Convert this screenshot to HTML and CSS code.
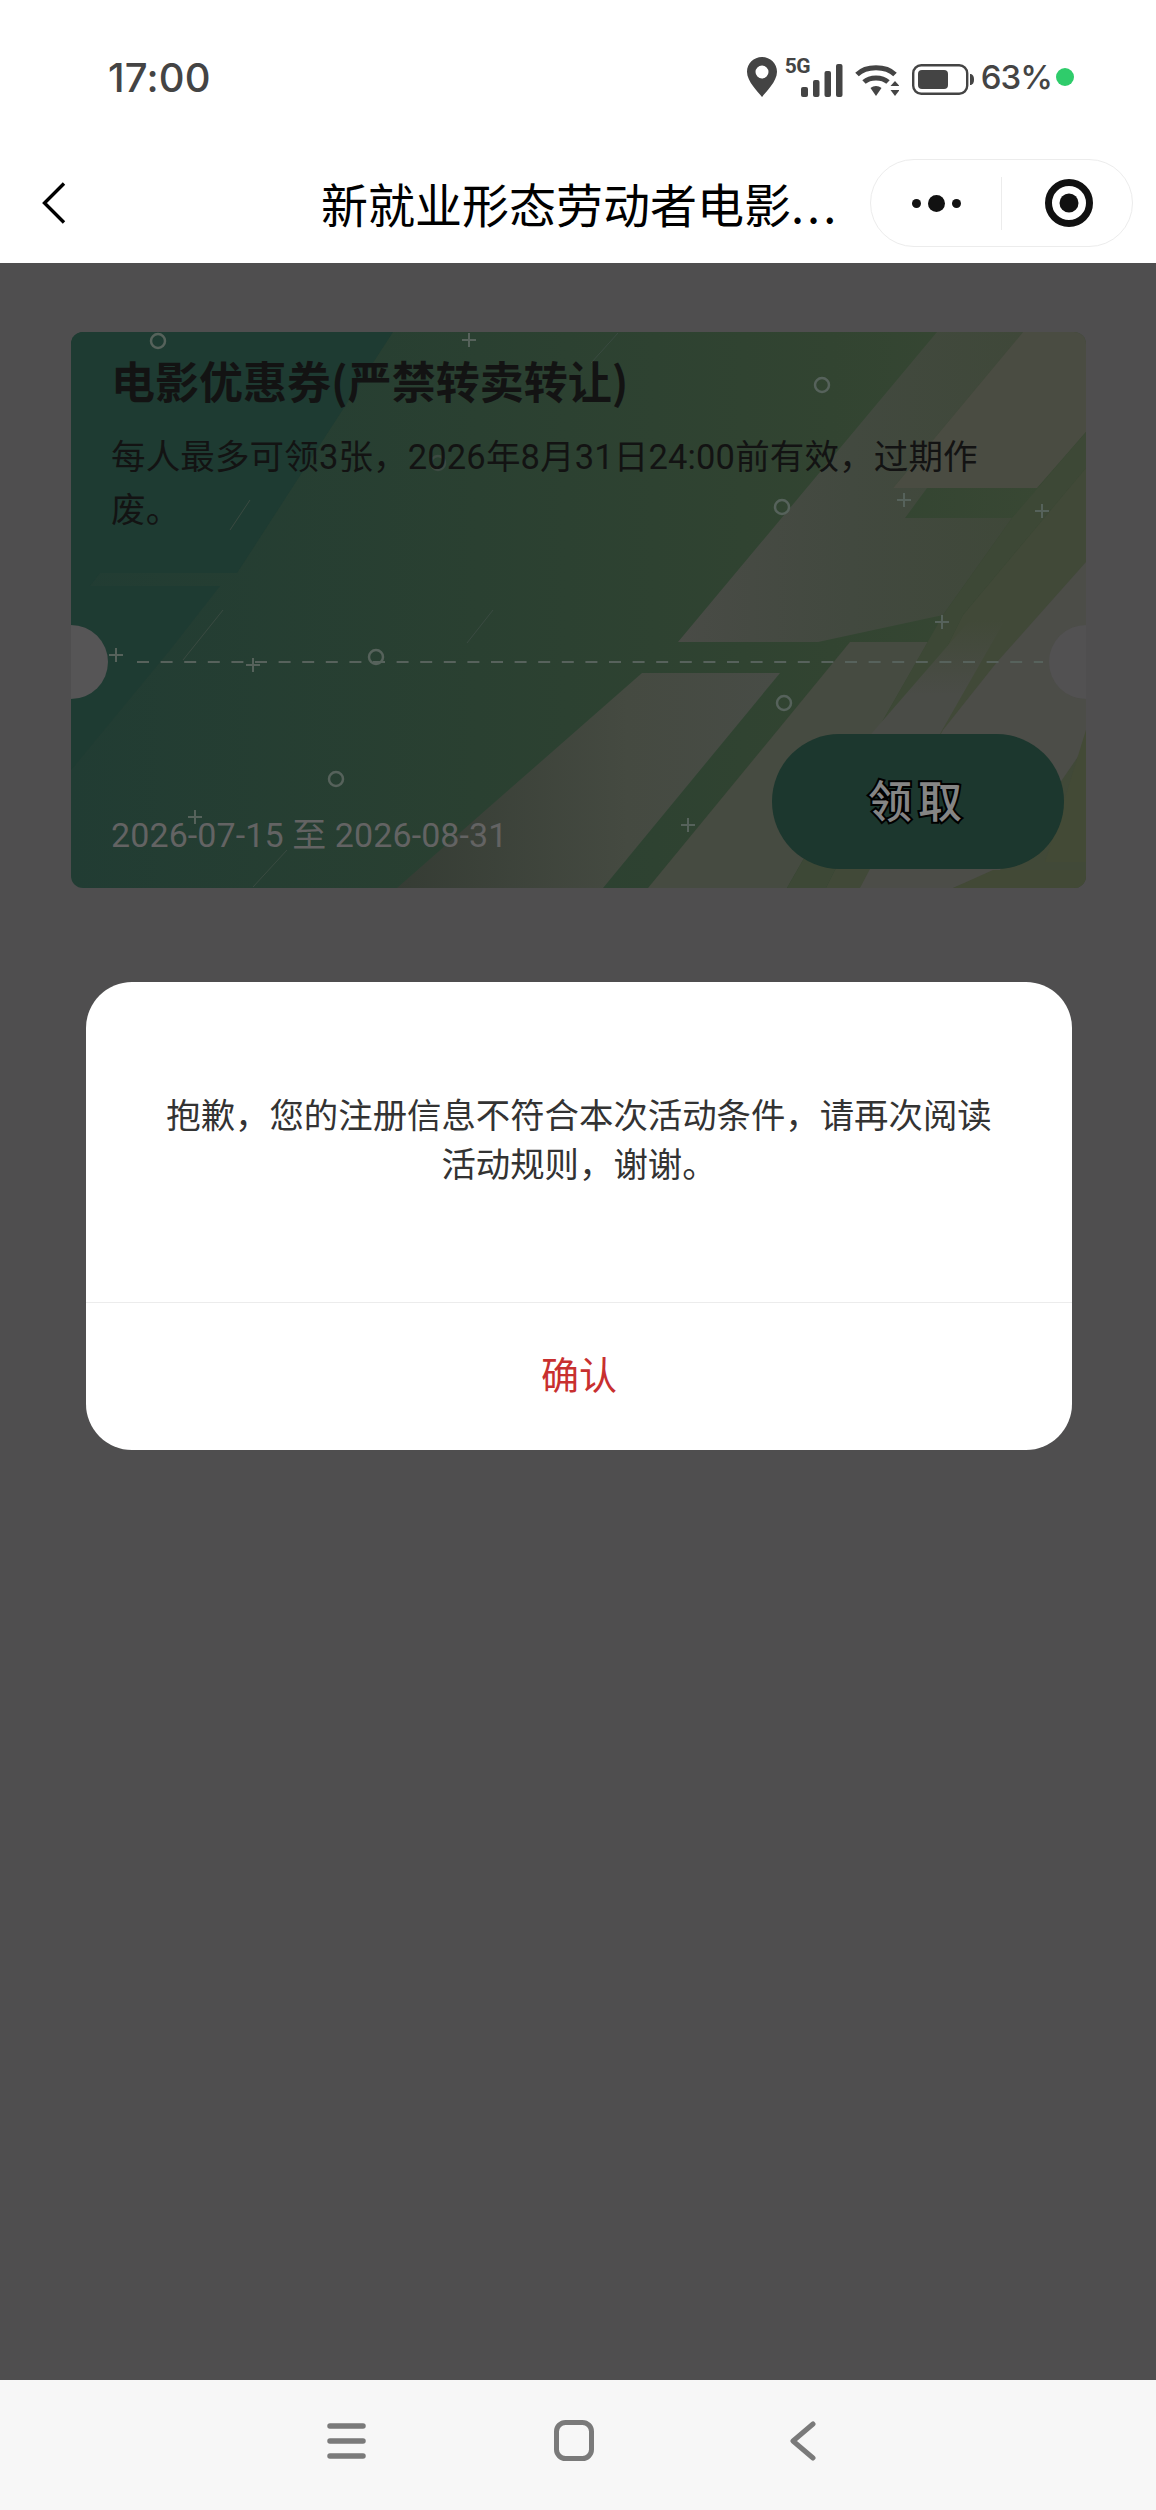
FILE: index.html
```html
<!DOCTYPE html>
<html lang="zh-CN">
<head>
<meta charset="utf-8">
<title>电影优惠券</title>
<link rel="stylesheet" href="styles.css">
</head>
<body>
<div class="phone">
  <header class="top">
    <div class="status">
      <span class="time">17:00</span>
      <div class="status-icons">
        <svg class="ico-pin" viewBox="0 0 30 40"><path fill="#444" fill-rule="evenodd" d="M15 0C6.700 0 0 6.600 0 14.800 0 24.500 11 35 15 40c4-5 15-15.500 15-25.200C30 6.600 23.300 0 15 0Zm0 8.500a6.500 6.500 0 1 1 0 13 6.500 6.500 0 0 1 0-13Z"/></svg>
        <div class="net">
          <span class="five-g">5G</span>
          <svg class="ico-bars" viewBox="0 0 42 33"><g fill="#444"><rect x="0" y="23" width="7" height="10" rx="2"/><rect x="12" y="16" width="6.500" height="17" rx="2"/><rect x="23.500" y="7" width="6.500" height="26" rx="2"/><rect x="35" y="0" width="6.500" height="33" rx="2"/></g></svg>
        </div>
        <svg class="ico-wifi" viewBox="0 0 44 33"><g fill="none" stroke="#444" stroke-width="5"><path d="M2 10.500C11 1.500 31 1.500 40 10.500"/><path d="M9 18c6-5.500 18-5.500 24 0"/></g><g fill="#444"><path d="M15.500 24c3-2.800 8-2.800 11 0L21 32Z"/><path d="M40 17l4.500 5h-9Z"/><path d="M40 32l-4.500-6h9Z"/></g></svg>
        <svg class="ico-batt" viewBox="0 0 62 31"><rect x="1.200" y="1.200" width="54" height="28.600" rx="8" fill="none" stroke="#444" stroke-width="2.400"/><rect x="6" y="6" width="30" height="19" rx="4" fill="#444"/><path d="M58 10c3 0 4 2.500 4 5.500S61 21 58 21Z" fill="#444"/></svg>
        <span class="pct">63%</span>
        <span class="led"></span>
      </div>
    </div>
    <nav class="navbar">
      <svg class="ico-back" viewBox="0 0 24 42"><path d="M22 1.500 2.500 21 22 40.500" fill="none" stroke="#000" stroke-width="3.400"/></svg>
      <h1 class="title">新就业形态劳动者电影<span class="ell">...</span></h1>
      <div class="capsule">
        <div class="cap-more"><i class="d-s"></i><i class="d-l"></i><i class="d-s"></i></div>
        <div class="cap-sep"></div>
        <div class="cap-close"><svg viewBox="0 0 50 50"><circle cx="25" cy="25" r="20.500" fill="none" stroke="#111" stroke-width="7"/><circle cx="25" cy="25" r="9.500" fill="#111"/></svg></div>
      </div>
    </nav>
  </header>

  <main class="main">
    <section class="coupon">
      <svg class="coupon-art" viewBox="71 332 1015 556" preserveAspectRatio="none" aria-hidden="true">
        <defs>
          <linearGradient id="gBase" x1="0" y1="0" x2="1" y2="0"><stop offset="0" stop-color="#213c33"/><stop offset=".4" stop-color="#2a4031"/><stop offset=".75" stop-color="#324431"/><stop offset="1" stop-color="#3a4834"/></linearGradient>
          <linearGradient id="gBand" x1="0" y1="0" x2="1" y2="0"><stop offset="0" stop-color="#494b46"/><stop offset=".5" stop-color="#42493f"/><stop offset="1" stop-color="#3f4839"/></linearGradient>
          <linearGradient id="gWedge" x1="0" y1="0" x2="1" y2="0"><stop offset="0" stop-color="#353c34"/><stop offset=".6" stop-color="#454a41"/><stop offset="1" stop-color="#484c46"/></linearGradient>
          <linearGradient id="gStrip" x1="0" y1="0" x2="0" y2="1"><stop offset="0" stop-color="#414938"/><stop offset=".5" stop-color="#4a4c47"/><stop offset="1" stop-color="#4a4c47"/></linearGradient>
        </defs>
        <rect x="71" y="332" width="1015" height="556" fill="url(#gBase)"/>
        <polygon points="71,332 393,332 237,573 100,573 71,610" fill="#1e3b32"/>
        <polygon points="71,586 220,586 170,650 71,770" fill="#1e3b32"/>
        <polygon points="937,332 1023,332 893,488 927,488 905,518 1012,518 943,615 818,642 678,642" fill="url(#gBand)"/>
        <polygon points="1023,332 1086,332 1086,432 1037,488 893,488" fill="#4a4c42"/>
        <polygon points="642,673 780,673 603,888 397,888" fill="url(#gWedge)"/>
        <polygon points="850,642 928,642 787,888 648,888" fill="#464b41"/>
        <polygon points="1086,432 1086,468 963,615 826,888 787,888 943,615 1012,518" fill="#3d4836"/>
        <polygon points="1086,468 1086,888 826,888 963,615" fill="#414938"/>
        <polygon points="970,620 1005,620 925,760 840,770" fill="url(#gStrip)"/>
        <polygon points="1086,562 1086,745 1000,870 953,888 860,888 943,730 997,662" fill="#4c4d48"/>
        <polygon points="953,888 993,870 1086,870 1086,888" fill="#424936"/>
        <polygon points="1086,730 1086,862 1045,862" fill="#434a36"/>
        <g class="hair">
          <path d="M223 610 183 660M493 610 467 643M618 333 591 363M287 850 253 887M250 500 230 530"/>
        </g>
        <line class="tear" x1="137" y1="662" x2="1043" y2="662"/>
        <g class="ring">
          <circle cx="158" cy="341" r="7"/><circle cx="822" cy="385" r="7"/><circle cx="782" cy="507" r="7"/>
          <circle cx="376" cy="657" r="7"/><circle cx="336" cy="779" r="7"/><circle cx="784" cy="703" r="7"/><circle class="dim" cx="438" cy="463" r="7"/>
        </g>
        <g class="cross">
          <path d="M462 340h14M469 333v14"/><path d="M897 500h14M904 493v14"/><path d="M1035 511h14M1042 504v14"/>
          <path d="M246 665h14M253 658v14"/><path d="M109 655h14M116 648v14"/><path d="M188 817h14M195 810v14"/>
          <path d="M935 622h14M942 615v14"/><path d="M681 825h14M688 818v14"/>
        </g>
      </svg>
      <span class="notch notch-l"></span>
      <span class="notch notch-r"></span>
      <div class="coupon-top">
        <h2 class="coupon-title">电影优惠券(严禁转卖转让)</h2>
        <p class="coupon-desc">每人最多可领3张，2026年8月31日24:00前有效，过期作废。</p>
      </div>
      <div class="coupon-bottom">
        <span class="coupon-date">2026-07-15 至 2026-08-31</span>
        <button class="claim">领取</button>
      </div>
    </section>

    <div class="dialog">
      <div class="dialog-body">
        <p class="dialog-text">抱歉，您的注册信息不符合本次活动条件，请再次阅读活动规则，谢谢。</p>
      </div>
      <div class="dialog-action">确认</div>
    </div>
  </main>

  <footer class="sysnav">
    <svg class="ico-menu" viewBox="0 0 39 36"><g stroke="#7a7a7a" stroke-width="5.500" stroke-linecap="round"><path d="M3 3h33M3 18h33M3 33h33"/></g></svg>
    <svg class="ico-home" viewBox="0 0 40 41"><rect x="2.500" y="2.500" width="35" height="36" rx="9" fill="none" stroke="#7a7a7a" stroke-width="5"/></svg>
    <svg class="ico-nback" viewBox="0 0 26 40"><path d="M23 3 3 20l20 17" fill="none" stroke="#7a7a7a" stroke-width="5" stroke-linecap="round" stroke-linejoin="round"/></svg>
  </footer>
</div>
</body>
</html>
```

FILE: styles.css
```css
* { box-sizing: border-box; }
html, body { margin: 0; padding: 0; }
body { background: #4d4d4d; }
.phone {
  width: 1156px;
  height: 2510px;
  display: flex;
  flex-direction: column;
  font-family: Roboto, "Noto Sans CJK SC", sans-serif;
  overflow: hidden;
}
.top { height: 263px; background: #fff; flex: none; display: flex; flex-direction: column; }
.status {
  height: 154px;
  padding: 0 82px 0 108px;
  display: flex;
  align-items: center;
  justify-content: space-between;
  flex: none;
}
.time { font-family: Inter, sans-serif; font-size: 40px; font-weight: 500; color: #444; letter-spacing: .2px; }
.status-icons { display: flex; align-items: center; }
.ico-pin { width: 30px; height: 40px; }
.net { position: relative; width: 64px; height: 40px; margin-left: 8px; }
.five-g { position: absolute; left: 0; top: -2px; font-size: 21px; font-weight: 700; color: #444; line-height: 22px; letter-spacing: -.5px; }
.ico-bars { position: absolute; left: 16px; top: 7px; width: 42px; height: 33px; }
.ico-wifi { width: 44px; height: 33px; margin: 7px 0 0 6px; }
.ico-batt { width: 62px; height: 31px; margin: 5px 0 0 13px; }
.pct { font-family: Inter, sans-serif; font-size: 33px; font-weight: 500; color: #444; margin-left: 7px; letter-spacing: -1px; }
.led { width: 18px; height: 18px; border-radius: 50%; background: #2fcc6b; margin-left: 4px; }

.navbar { position: relative; flex: 1; display: flex; align-items: center; }
.ico-back { position: absolute; left: 42px; top: 28px; width: 24px; height: 42px; }
.title {
  margin: 0 0 0 321px;
  font-family: "Noto Sans CJK SC", sans-serif;
  font-size: 47px;
  font-weight: 400;
  color: #000;
  line-height: 60px;
  white-space: nowrap;
  position: relative;
  top: -6px;
}
.ell { letter-spacing: 3px; }
.capsule {
  position: absolute;
  left: 870px;
  top: 5px;
  width: 263px;
  height: 88px;
  border: 1.500px solid #ececec;
  border-radius: 44px;
  background: #fff;
  display: flex;
  align-items: center;
}
.cap-more { width: 130px; display: flex; align-items: center; justify-content: center; gap: 7px; }
.d-s { width: 9px; height: 9px; border-radius: 50%; background: #111; }
.d-l { width: 17px; height: 17px; border-radius: 50%; background: #111; }
.cap-sep { width: 1px; height: 53px; background: #ececec; }
.cap-close { flex: 1; display: flex; justify-content: center; padding-left: 3px; }
.cap-close svg { width: 50px; height: 50px; }

.main {
  position: relative;
  flex: 1;
  background: #4f4e4f;
  padding: 69px 70px 0 71px;
}
.coupon {
  position: relative;
  height: 556px;
  border-radius: 12px;
  overflow: hidden;
  display: flex;
  flex-direction: column;
  justify-content: space-between;
  padding: 0 22px 19px 41px;
}
.coupon-art { position: absolute; inset: 0; width: 100%; height: 100%; }
.tear { stroke: #57625c; stroke-width: 2; stroke-dasharray: 12 11.600; }
.hair path { fill: none; stroke: #3a4a41; stroke-width: 1; }
.ring circle { fill: none; stroke: #56625b; stroke-width: 2.500; }
.ring .dim { stroke: #3d4a42; }
.cross path { fill: none; stroke: #56625b; stroke-width: 2; }
.notch { position: absolute; top: 293px; width: 74px; height: 74px; border-radius: 50%; background: #565556; }
.notch-l { left: -37px; }
.notch-r { right: -37px; background: #525152; }
.coupon-top { position: relative; }
.coupon-title {
  margin: 22px 0 0 -1px;
  font-family: "Noto Sans CJK SC", sans-serif;
  font-size: 44px;
  line-height: 52px;
  font-weight: 700;
  color: #131313;
  white-space: nowrap;
}
.coupon-desc {
  margin: 25px 0 0 -1px;
  font-size: 34.500px;
  line-height: 53px;
  letter-spacing: .15px;
  color: #131313;
  width: 880px;
}
.coupon-bottom { position: relative; display: flex; align-items: flex-end; justify-content: space-between; }
.coupon-date { font-size: 34px; line-height: 44px; color: #636363; margin: 0 0 12px -1px; white-space: nowrap; letter-spacing: .1px; }
.claim {
  width: 292px;
  height: 135px;
  border: 0;
  border-radius: 68px;
  background: #1c372e;
  color: #858585;
  font-family: "Noto Sans CJK SC", sans-serif;
  font-size: 44px;
  font-weight: 500;
  letter-spacing: 6px;
  -webkit-text-stroke: 4px #000;
  paint-order: stroke fill;
  padding: 0 0 5px;
}

.dialog {
  position: absolute;
  left: 86px;
  top: 719px;
  width: 986px;
  height: 468px;
  background: #fff;
  border-radius: 46px;
  display: flex;
  flex-direction: column;
  overflow: hidden;
}
.dialog-body {
  height: 321px;
  border-bottom: 1.500px solid #ececec;
  display: flex;
  align-items: center;
  justify-content: center;
  flex: none;
  padding-bottom: 8px;
}
.dialog-text {
  margin: 0;
  width: 830px;
  font-family: "Noto Sans CJK SC", sans-serif;
  font-size: 34.400px;
  line-height: 49px;
  color: #333;
  text-align: center;
}
.dialog-action {
  flex: 1;
  display: flex;
  align-items: center;
  justify-content: center;
  font-family: "Noto Sans CJK SC", sans-serif;
  font-size: 38px;
  color: #c8302f;
  padding-bottom: 8px;
}

.sysnav {
  height: 130px;
  flex: none;
  background: #f7f7f7;
  display: flex;
  align-items: center;
  padding: 0 0 9px 327px;
}
.ico-menu { width: 39px; height: 36px; }
.ico-home { width: 40px; height: 41px; margin-left: 188px; }
.ico-nback { width: 26px; height: 40px; margin-left: 196px; }
```
